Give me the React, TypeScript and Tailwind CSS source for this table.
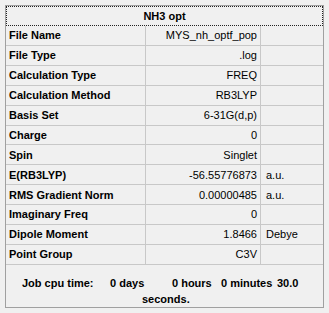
const rows: { label: string; value: string; unit?: string }[] = [
  { label: "File Name", value: "MYS_nh_optf_pop" },
  { label: "File Type", value: ".log" },
  { label: "Calculation Type", value: "FREQ" },
  { label: "Calculation Method", value: "RB3LYP" },
  { label: "Basis Set", value: "6-31G(d,p)" },
  { label: "Charge", value: "0" },
  { label: "Spin", value: "Singlet" },
  { label: "E(RB3LYP)", value: "-56.55776873", unit: "a.u." },
  { label: "RMS Gradient Norm", value: "0.00000485", unit: "a.u." },
  { label: "Imaginary Freq", value: "0" },
  { label: "Dipole Moment", value: "1.8466", unit: "Debye" },
  { label: "Point Group", value: "C3V" },
];

export default function App() {
  return (
    <div
      className="w-[329px] h-[313px] bg-[#f0f0f0] pt-[5px] pl-[5px] text-[11px] text-black"
      style={{ fontFamily: '"Liberation Sans", Arial, sans-serif' }}
    >
      <div className="w-[319px] h-[303px] border border-[#a0a0a0] flex flex-col">
        <div className="h-[20px] border border-dotted border-[#222] flex items-center justify-center font-bold">
          NH3 opt
        </div>

        {rows.map((r) => (
          <div key={r.label} className="h-[20px] flex border-b border-[#c8c8c8]">
            <div className="w-[140px] border-r border-[#c8c8c8] flex items-center pl-[3px] font-bold">
              {r.label}
            </div>
            <div className="w-[115px] border-r border-[#c8c8c8] flex items-center justify-end pr-[3px]">
              {r.value}
            </div>
            <div className="flex-1 flex items-center pl-[5px]">{r.unit}</div>
          </div>
        ))}

        <div className="flex-1 flex flex-col font-bold pt-[10px] leading-[16px]">
          <div className="flex pl-[16px] whitespace-pre">
            <span className="w-[88px]">Job cpu time:</span>
            <span className="w-[62px]">0 days</span>
            <span className="w-[49px]">0 hours</span>
            <span className="w-[56px]">0 minutes</span>
            <span>30.0</span>
          </div>
          <div className="pl-[136px]">seconds.</div>
        </div>
      </div>
    </div>
  );
}
